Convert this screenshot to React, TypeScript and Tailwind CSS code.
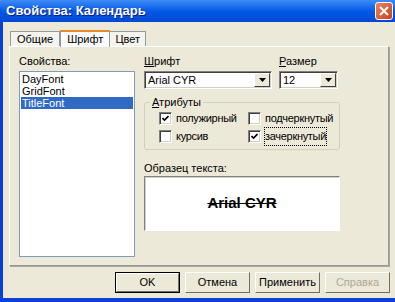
const font = { fontFamily: '"Liberation Sans", Arial, sans-serif' };

function Check({ checked, label, dotted }: { checked: boolean; label: string; dotted?: boolean }) {
  return (
    <div className="flex items-center gap-[4px] h-[13px]">
      <div className="w-[13px] h-[13px] shrink-0 bg-white border border-t-[#808080] border-l-[#808080] border-b-white border-r-white shadow-[inset_1px_1px_0_#404040,inset_-1px_-1px_0_#d4d0c8] flex items-center justify-center">
        {checked && (
          <svg width="7" height="7" viewBox="0 0 7 7">
            <path d="M0.5 3 L2.5 5 L6.5 1" stroke="#000" strokeWidth="1.6" fill="none" />
          </svg>
        )}
      </div>
      <span className={`whitespace-nowrap tracking-[-0.3px] ${dotted ? "outline outline-1 outline-dotted outline-black" : ""}`}>{label}</span>
    </div>
  );
}

function Combo({ value, width }: { value: string; width: string }) {
  return (
    <div className={`${width} h-[18px] bg-white border border-t-[#808080] border-l-[#808080] border-b-white border-r-white shadow-[inset_1px_1px_0_#404040,inset_-1px_-1px_0_#d4d0c8] flex items-center`}>
      <span className="flex-1 pl-[3px] leading-none">{value}</span>
      <div className="w-[16px] h-[14px] mr-[1px] bg-[#ece9d8] border border-t-white border-l-white border-b-[#404040] border-r-[#404040] flex items-center justify-center">
        <svg width="7" height="4" viewBox="0 0 7 4">
          <path d="M0 0 H7 L3.5 4 Z" fill="#000" />
        </svg>
      </div>
    </div>
  );
}

function Btn({ label, def, disabled }: { label: string; def?: boolean; disabled?: boolean }) {
  return (
    <div className={`w-[65px] h-[21px] flex items-center justify-center bg-[#ece9d8] ${def ? "border border-black" : ""}`}>
      <div className={`w-full h-full flex items-center justify-center border border-t-white border-l-white border-b-[#716f64] border-r-[#716f64] ${disabled ? "text-[#aca899]" : "text-black"}`}>
        {label}
      </div>
    </div>
  );
}

export default function App() {
  return (
    <div className="w-[395px] h-[302px] bg-[#0a3fd8] flex flex-col overflow-hidden text-[11px] text-black" style={font}>
      <header className="h-[22px] shrink-0 flex items-center justify-between pl-[6px] pr-[2px] bg-gradient-to-b from-[#3d8cf7] via-[#0258e6] to-[#0348d5]">
        <span className="text-white font-bold text-[13px] [text-shadow:1px_1px_0_#0a1e8c]">Свойства: Календарь</span>
        <div className="w-[18px] h-[18px] rounded-[3px] border border-white bg-gradient-to-br from-[#e9835f] to-[#c8401d] flex items-center justify-center">
          <svg width="10" height="10" viewBox="0 0 10 10">
            <path d="M1 1 L9 9 M9 1 L1 9" stroke="#fff" strokeWidth="2" />
          </svg>
        </div>
      </header>
      <div className="flex-1 ml-[3px] mb-[4px] bg-[#ece9d8] flex flex-col pl-[6px]">
        <div className="flex items-end h-[24px] pl-[1px]">
          <div className="h-[15px] px-[6px] border border-b-0 border-[#919b9c] bg-[#f4f3ee] flex items-center">Общие</div>
          <div className="h-[17px] px-[6px] border border-b-0 border-[#919b9c] border-t-[#e68b2c] border-t-2 bg-[#fcfcfe] flex items-center -mb-px relative z-10">Шрифт</div>
          <div className="h-[15px] px-[5px] border border-b-0 border-l-0 border-[#919b9c] bg-[#f4f3ee] flex items-center">Цвет</div>
        </div>
        <div className="w-[380px] h-[220px] border border-t-white border-l-white border-b-[#919b9c] border-r-[#919b9c] shadow-[1px_1px_0_#aca899] flex pt-[8px] pl-[9px] gap-[9px]">
          <div className="flex flex-col w-[116px]">
            <span className="h-[16px] leading-[13px]">Свойства:</span>
            <div className="h-[186px] bg-white border border-[#7f9db9] pt-[1px] px-[1px] flex flex-col">
              <span className="h-[12px] leading-[12px] pl-[1px]">DayFont</span>
              <span className="h-[12px] leading-[12px] pl-[1px]">GridFont</span>
              <span className="h-[12px] leading-[12px] pl-[1px] bg-[#316ac5] text-white">TitleFont</span>
            </div>
          </div>
          <div className="flex flex-col w-[196px]">
            <div className="flex gap-[7px]">
              <div className="flex flex-col">
                <span className="h-[16px] leading-[13px]"><u>Ш</u>рифт</span>
                <Combo value="Arial CYR" width="w-[128px]" />
              </div>
              <div className="flex flex-col">
                <span className="h-[16px] leading-[13px]"><u>Р</u>азмер</span>
                <Combo value="12" width="w-[59px]" />
              </div>
            </div>
            <fieldset className="mt-[7px] h-[54px] min-w-0 border border-[#d0d0bf] rounded-[3px] pl-[14px] pr-[2px] pb-[3px] w-[196px]">
              <legend className="px-[2px] -ml-[9px] leading-[12px]"><u>А</u>трибуты</legend>
              <div className="grid grid-cols-[89px_1fr] gap-y-[5px] mt-[4px]">
                <Check checked label="полужирный" />
                <Check checked={false} label="подчеркнутый" />
                <Check checked={false} label="курсив" />
                <Check checked label="зачеркнутый" dotted />
              </div>
            </fieldset>
            <span className="mt-[12px] h-[13px] leading-[13px]">Образец текста:</span>
            <div className="mt-[1px] h-[55px] bg-white border border-t-[#808080] border-l-[#808080] border-b-white border-r-white shadow-[inset_1px_1px_0_#d4d0c8] flex items-center justify-center">
              <span className="font-bold text-[15px] line-through">Arial CYR</span>
            </div>
          </div>
        </div>
        <div className="flex justify-end gap-[5px] pr-[5px] pt-[6px]">
          <Btn label="OK" def />
          <Btn label="Отмена" />
          <Btn label="Применить" />
          <Btn label="Справка" disabled />
        </div>
      </div>
    </div>
  );
}
